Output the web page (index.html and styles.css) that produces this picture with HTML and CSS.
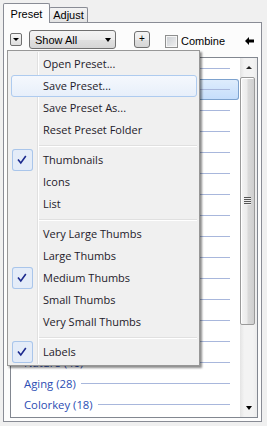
FILE: index.html
```html
<!DOCTYPE html>
<html lang="en">
<head>
    <meta charset="UTF-8">
    <meta name="viewport" content="width=device-width, initial-scale=1.0">
    <title>Preset Browser</title>
    <link rel="stylesheet" href="styles.css">
</head>
<body>
    <div class="tabs">
        <div class="tab active">Preset</div>
        <div class="tab">Adjust</div>
    </div>
    <div class="panel">
        <div class="toolbar">
            <span class="menu-btn"><span class="tri small"></span></span>
            <span class="combo">Show All<span class="tri"></span></span>
            <span class="plus-btn">+</span>
            <span class="checkbox"></span>
            <span class="combine">Combine</span>
            <svg class="back" width="9" height="8" viewBox="0 0 9 8"><polygon points="0,4 4,0 4,2.5 9,2.5 9,5.5 4,5.5 4,8" fill="#000"/></svg>
        </div>
        <div class="list">
            <!-- rows under the open menu keep only their rule lines -->
            <div class="rows">
                <div class="row"><span class="rule"></span></div>
                <div class="row selected"><span class="rule"></span></div>
                <div class="row"><span class="rule"></span></div>
                <div class="row"><span class="rule"></span></div>
                <div class="row"><span class="rule"></span></div>
                <div class="row"><span class="rule"></span></div>
                <div class="row"><span class="rule"></span></div>
                <div class="row"><span class="rule"></span></div>
                <div class="row"><span class="rule"></span></div>
                <div class="row"><span class="rule"></span></div>
                <div class="row"><span class="rule"></span></div>
                <div class="row"><span class="rule"></span></div>
                <div class="row"><span class="rule"></span></div>
                <div class="row"><span class="rule"></span></div>
                <div class="row"><span class="name">Nature (46)</span><span class="rule"></span></div>
                <div class="row"><span class="name">Aging (28)</span><span class="rule"></span></div>
                <div class="row"><span class="name">Colorkey (18)</span><span class="rule"></span></div>
            </div>
            <div class="scrollbar">
                <div class="sb-btn"><span class="tri up"></span></div>
                <div class="thumb"><span class="grip"></span></div>
                <div class="track"></div>
                <div class="sb-btn"><span class="tri"></span></div>
            </div>
        </div>
    </div>

    <div class="menu">
        <div class="item">Open Preset...</div>
        <div class="item hover">Save Preset...</div>
        <div class="item">Save Preset As...</div>
        <div class="item">Reset Preset Folder</div>
        <div class="sep"></div>
        <div class="item"><span class="check"><svg width="21" height="22" viewBox="0 0 21 22"><path d="M6 10.5 L8.8 14 L13.8 7" fill="none" stroke="#1c2a8e" stroke-width="1.6"/></svg></span>Thumbnails</div>
        <div class="item">Icons</div>
        <div class="item">List</div>
        <div class="sep"></div>
        <div class="item">Very Large Thumbs</div>
        <div class="item">Large Thumbs</div>
        <div class="item"><span class="check"><svg width="21" height="22" viewBox="0 0 21 22"><path d="M6 10.5 L8.8 14 L13.8 7" fill="none" stroke="#1c2a8e" stroke-width="1.6"/></svg></span>Medium Thumbs</div>
        <div class="item">Small Thumbs</div>
        <div class="item">Very Small Thumbs</div>
        <div class="sep"></div>
        <div class="item"><span class="check"><svg width="21" height="22" viewBox="0 0 21 22"><path d="M6 10.5 L8.8 14 L13.8 7" fill="none" stroke="#1c2a8e" stroke-width="1.6"/></svg></span>Labels</div>
    </div>
</body>
</html>
```

FILE: styles.css
```css
body {
    margin: 0;
    padding: 3px 0 0 3px;
    width: 267px;
    height: 426px;
    box-sizing: border-box;
    overflow: hidden;
    background-color: #f0f0f0;
    font-family: "Liberation Sans", Arial, sans-serif;
    font-size: 11px;
    color: #000;
    position: relative;
}
.tabs {
    display: flex;
    align-items: flex-end;
    height: 19px;
}
.tab {
    box-sizing: border-box;
    border: 1px solid #898c95;
    border-bottom: none;
    text-align: center;
}
.tab.active {
    position: relative;
    z-index: 1;
    width: 47px;
    height: 20px;
    margin-bottom: -1px;
    padding-top: 2px;
    line-height: 16px;
    background-color: #fcfcfc;
    border-radius: 2px 2px 0 0;
}
.tab:not(.active) {
    width: 39px;
    height: 15px;
    margin-left: -1px;
    line-height: 14px;
    background: linear-gradient(#f3f3f3, #e3e3e3);
    border-radius: 2px 2px 0 0;
}
.panel {
    box-sizing: border-box;
    width: 259px;
    height: 400px;
    border: 1px solid #898c95;
    background-color: #fcfcfc;
    padding: 0 3px 3px 6px;
}
.toolbar {
    display: flex;
    align-items: center;
    height: 19px;
    margin: 7px 0 8px 0;
}
.tri {
    display: block;
    width: 0;
    height: 0;
    border-left: 3.5px solid transparent;
    border-right: 3.5px solid transparent;
    border-top: 4px solid #000;
}
.tri.small {
    border-left-width: 3px;
    border-right-width: 3px;
    border-top-width: 3px;
}
.tri.up {
    border-top: none;
    border-bottom: 3px solid #222;
}
.menu-btn {
    box-sizing: border-box;
    width: 12px;
    height: 13px;
    border: 1px solid #707070;
    border-radius: 2px;
    background: linear-gradient(#f6f6f6, #dedede);
    display: flex;
    align-items: center;
    justify-content: center;
}
.combo {
    box-sizing: border-box;
    width: 87px;
    height: 19px;
    margin-left: 7px;
    padding: 0 4px 0 5px;
    border: 1px solid #707070;
    border-radius: 3px;
    background: linear-gradient(#f4f4f4 0%, #ececec 50%, #e0e0e0 51%, #d6d6d6 100%);
    display: flex;
    align-items: center;
}
.combo .tri {
    margin-left: auto;
}
.plus-btn {
    box-sizing: border-box;
    width: 16px;
    height: 17px;
    margin-left: 18px;
    border: 1px solid #707070;
    border-radius: 3px;
    background: linear-gradient(#f4f4f4 0%, #ececec 50%, #e0e0e0 51%, #d6d6d6 100%);
    text-align: center;
    line-height: 14px;
    font-size: 10px;
}
.checkbox {
    box-sizing: border-box;
    width: 13px;
    height: 13px;
    margin: 3px 0 0 15px;
    border: 1px solid #8e8f8f;
    background: linear-gradient(135deg, #c9cdd2, #f2f2f2);
    box-shadow: inset 0 0 0 1px #f6f6f6;
}
.combine {
    margin: 2px 0 0 3px;
}
.back {
    margin: 3px 4px 0 auto;
}
.list {
    box-sizing: border-box;
    height: 361px;
    border: 1px solid #828790;
    background-color: #fff;
    display: flex;
    overflow: hidden;
}
.rows {
    width: 229px;
}
.row {
    box-sizing: border-box;
    height: 21px;
    padding: 0 10px 0 13px;
    display: flex;
    align-items: center;
    font-family: "Open Sans", sans-serif;
    font-size: 11.3px;
    color: #2b4db3;
}
.row.selected {
    margin: 0 1px 0 2px;
    padding: 0 9px 0 11px;
    border-radius: 3px;
    background: linear-gradient(#dfedfc, #c4ddfc);
    box-shadow: inset 0 0 0 1px #7da2ce;
}
.name {
    white-space: nowrap;
    margin-right: 5px;
}
.rule {
    flex: 1;
    height: 1px;
    background-color: #a8b7dc;
}
.scrollbar {
    width: 17px;
    display: flex;
    flex-direction: column;
    background: linear-gradient(to right, #e4e4e4, #f3f3f3 25%, #f3f3f3 75%, #ececec);
}
.sb-btn {
    height: 19px;
    display: flex;
    align-items: center;
    justify-content: center;
}
.thumb {
    box-sizing: border-box;
    width: 15px;
    height: 248px;
    border: 1px solid #9a9a9a;
    border-radius: 2px;
    background: linear-gradient(to right, #f4f4f4 0%, #ebebeb 45%, #d9d9d9 55%, #cfcfcf 100%);
    box-shadow: inset 1px 1px 0 #fff;
    display: flex;
    align-items: center;
    justify-content: center;
}
.grip {
    width: 7px;
    height: 8px;
    background: repeating-linear-gradient(#555 0, #555 1px, #eee 1px, #eee 2px);
}
.track {
    flex: 1;
}
.menu {
    position: absolute;
    left: 7px;
    top: 50px;
    width: 193px;
    box-sizing: border-box;
    padding: 2px 2px 2px 3px;
    border: 1px solid #979797;
    background-color: #f0f0f0;
    box-shadow: 2px 2px 2px rgba(0, 0, 0, 0.45);
    font-family: "Open Sans", sans-serif;
    font-size: 11px;
    color: #1e1a2a;
}
.menu::before {
    content: "";
    position: absolute;
    left: 29px;
    top: 1px;
    bottom: 1px;
    width: 1px;
    background-color: #e0e0e0;
    border-right: 1px solid #fff;
}
.item {
    position: relative;
    box-sizing: border-box;
    height: 22px;
    line-height: 22px;
    padding-left: 32px;
    white-space: nowrap;
}
.item.hover {
    line-height: 20px;
    padding-left: 31px;
    border: 1px solid #aecbef;
    border-radius: 3px;
    background: linear-gradient(#f5f8fd, #e7effa);
}
.check {
    position: absolute;
    left: 1px;
    top: 0;
    width: 21px;
    height: 22px;
    border-radius: 3px;
    background-color: #e4ecf8;
    box-shadow: inset 0 0 0 1px #a9c5ea;
}
.check svg {
    display: block;
}
.sep {
    height: 1px;
    margin: 4px 0 2px 28px;
    background-color: #e0e0e0;
    border-bottom: 1px solid #fff;
}
```
